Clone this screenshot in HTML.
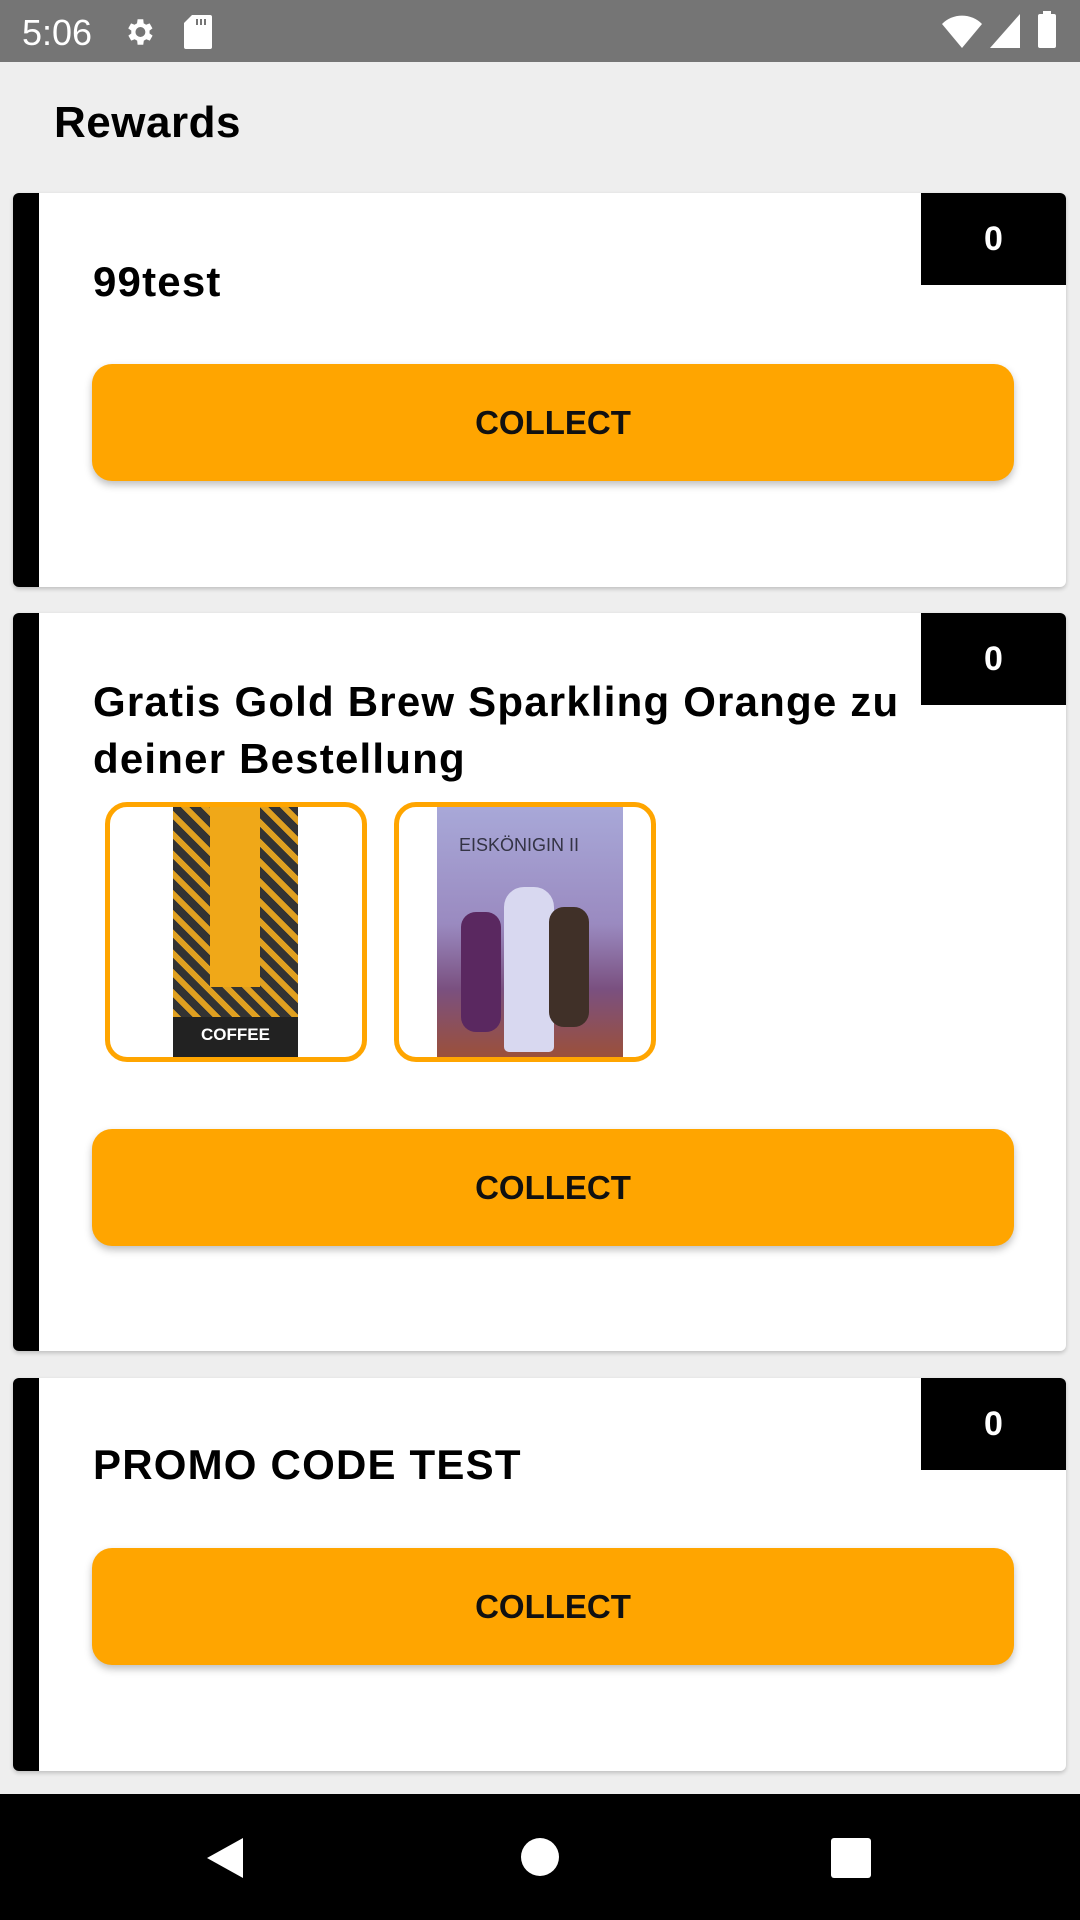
<!DOCTYPE html>
<html><head><meta charset="utf-8"><style>
*{box-sizing:border-box;margin:0;padding:0}
body{width:1080px;height:1920px;background:#eeeeee;font-family:"Liberation Sans",sans-serif;position:relative;overflow:hidden}
.sb{position:absolute;left:0;top:0;width:1080px;height:62px;background:#757575;color:#fff}
.card{position:absolute;left:13px;width:1053px;background:#fff;border-radius:6px;box-shadow:0 2px 4px rgba(0,0,0,.2);overflow:hidden}
.bar{position:absolute;left:0;top:0;bottom:0;width:26px;background:#000}
.badge{position:absolute;right:0;top:0;width:145px;height:92px;background:#000;color:#fff;font-weight:bold;font-size:34px;text-align:center;line-height:92px}
.title{position:absolute;left:80px;font-weight:bold;font-size:42px;color:#000;line-height:57px;letter-spacing:1.2px}
.btn{position:absolute;left:79px;width:922px;height:117px;background:#ffa500;border-radius:20px;box-shadow:0 4px 8px rgba(0,0,0,.25);font-weight:bold;font-size:33px;text-align:center;line-height:117px;color:#111}
.img{position:absolute;top:189px;width:262px;height:260px;border:5px solid #ffa500;border-radius:22px;overflow:hidden;background:#fff}
.nav{position:absolute;left:0;top:1794px;width:1080px;height:126px;background:#000}
</style></head><body>
<div class="sb">
<div style="position:absolute;left:22px;top:12px;font-size:36px">5:06</div>
<svg style="position:absolute;left:122px;top:15px" width="34" height="34" viewBox="0 0 24 24"><path fill="#fff" d="M19.4 13a7.5 7.5 0 0 0 0-2l2.1-1.6-2-3.5-2.5 1a7 7 0 0 0-1.700-1L15 3h-4l-.4 2.9a7 7 0 0 0-1.7 1l-2.5-1-2 3.5L6.6 11a7.5 7.5 0 0 0 0 2l-2.1 1.6 2 3.5 2.5-1a7 7 0 0 0 1.7 1L11 21h4l.4-2.9a7 7 0 0 0 1.7-1l2.5 1 2-3.5zM13 15.5a3.5 3.5 0 1 1 0-7 3.5 3.5 0 0 1 0 7z"/></svg>
<svg style="position:absolute;left:184px;top:15px" width="28" height="34" viewBox="0 0 14 17"><path fill="#fff" d="M4 0h9a1 1 0 0 1 1 1v15a1 1 0 0 1-1 1H1a1 1 0 0 1-1-1V4z"/><path fill="#757575" d="M6 2h1v3H6zM8 2h1v3H8zM10 2h1v3h-1z"/></svg>
<svg style="position:absolute;left:942px;top:14px" width="40" height="34" viewBox="0 0 40 34"><path fill="#fff" d="M0 10 A28 28 0 0 1 40 10 L20 34z"/></svg>
<svg style="position:absolute;left:990px;top:14px" width="30" height="34" viewBox="0 0 30 34"><path fill="#fff" d="M30 0V34H0z"/></svg>
<div style="position:absolute;left:1038px;top:14px;width:18px;height:34px;background:#fff;border-radius:2px"></div>
<div style="position:absolute;left:1043px;top:11px;width:8px;height:4px;background:#fff"></div>
</div>
<div style="position:absolute;left:54px;top:98px;font-size:44px;font-weight:bold;color:#000;letter-spacing:0.5px">Rewards</div>

<div class="card" style="top:193px;height:394px">
<div class="bar"></div><div class="badge">0</div>
<div class="title" style="top:60px">99test</div>
<div class="btn" style="top:171px">COLLECT</div>
</div>

<div class="card" style="top:613px;height:738px">
<div class="bar"></div><div class="badge">0</div>
<div class="title" style="top:60px;width:900px">Gratis Gold Brew Sparkling Orange zu deiner Bestellung</div>
<div class="img" style="left:92px">
<div style="position:absolute;left:63px;top:0;width:125px;height:260px;background:#2a2a2a"></div>
<div style="position:absolute;left:63px;top:0;width:125px;height:210px;background:repeating-linear-gradient(45deg,#e0a020 0 6px,#333 6px 14px)"></div>
<div style="position:absolute;left:100px;top:0;width:50px;height:180px;background:#f0a818"></div>
<div style="position:absolute;left:63px;top:210px;width:125px;height:50px;background:#222;color:#fff;font-size:17px;font-weight:bold;text-align:center;padding-top:8px">COFFEE</div>
</div>
<div class="img" style="left:381px">
<div style="position:absolute;left:38px;top:0;width:186px;height:260px;background:linear-gradient(#a8a8d8,#9a8ac0 45%,#7a5080 70%,#a05030)"></div>
<div style="position:absolute;left:60px;top:28px;color:#334;font-size:18px">EISKÖNIGIN II</div>
<div style="position:absolute;left:105px;top:80px;width:50px;height:165px;background:#d8d8f0;border-radius:20px 20px 5px 5px"></div>
<div style="position:absolute;left:62px;top:105px;width:40px;height:120px;background:#5a2860;border-radius:15px"></div>
<div style="position:absolute;left:150px;top:100px;width:40px;height:120px;background:#403028;border-radius:15px"></div>
</div>
<div class="btn" style="top:516px">COLLECT</div>
</div>

<div class="card" style="top:1378px;height:393px">
<div class="bar"></div><div class="badge">0</div>
<div class="title" style="top:58px">PROMO CODE TEST</div>
<div class="btn" style="top:170px">COLLECT</div>
</div>

<div class="nav">
<svg style="position:absolute;left:205px;top:42px" width="40" height="44" viewBox="0 0 40 44"><path fill="#fff" d="M38 2V42L2 22z"/></svg>
<div style="position:absolute;left:521px;top:44px;width:38px;height:38px;border-radius:50%;background:#fff"></div>
<div style="position:absolute;left:831px;top:44px;width:40px;height:40px;background:#fff;border-radius:3px"></div>
</div>
</body></html>
